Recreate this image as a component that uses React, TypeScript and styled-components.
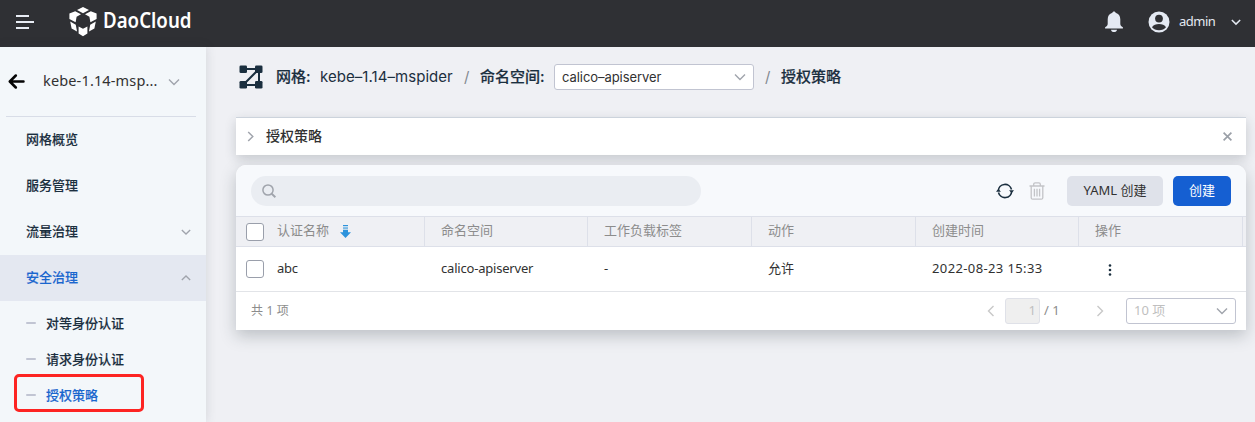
import React from 'react';
import styled, { createGlobalStyle } from 'styled-components';

const sans = `"Noto Sans", "Noto Sans CJK SC", sans-serif`;
const rounded = `Inter, "Noto Sans CJK SC", sans-serif`;

const GlobalStyle = createGlobalStyle`
  *, *::before, *::after { box-sizing: border-box; }
  body { margin: 0; background: #eff0f4; font-family: ${sans}; font-size: 13px; color: #313131; overflow: hidden; }
  button, input { font: inherit; border: 0; padding: 0; margin: 0; }
  svg { display: block; flex: none; }
`;

const Page = styled.div`
  height: 422px;
  display: flex;
  flex-direction: column;
  overflow: hidden;
`;

const TopBar = styled.header`
  height: 47px;
  flex: none;
  display: flex;
  align-items: center;
  padding: 0 14px 4px 16px;
  background: #2f3034;
  color: #e4e9f2;
`;

const Brand = styled.div`
  display: flex;
  align-items: center;
  gap: 5.5px;
  margin-left: 35px;
`;

const BrandName = styled.span`
  font-size: 21px;
  font-weight: 600;
  line-height: 28px;
  color: #fff;
  letter-spacing: 0;
  margin-top: -3px;
  transform: scaleX(0.89);
  transform-origin: left;
`;

const UserArea = styled.div`
  display: flex;
  align-items: center;
  margin-left: auto;
`;

const UserName = styled.span`
  font-size: 13px;
  margin: -2px 16px 0 9px;
  width: 36px;
  white-space: nowrap;
  letter-spacing: -0.5px;
`;

const Body = styled.div`
  flex: 1;
  min-height: 0;
  display: flex;
`;

const Sidebar = styled.nav`
  width: 206px;
  flex: none;
  background: #f3f7fa;
  box-shadow: 0 0 10px rgba(60, 70, 80, 0.16);
`;

const MeshPicker = styled.div`
  height: 70px;
  margin: 0 10px 0 6px;
  padding: 0 16px 0 2px;
  border-bottom: 1px solid #d8dde7;
  display: flex;
  align-items: center;
`;

const MeshName = styled.span`
  margin: -3px 0 0 18px;
  width: 126px;
  font-size: 14.5px;
  line-height: 20px;
  white-space: nowrap;
  letter-spacing: 0.15px;
`;

const NavItem = styled.a<{ $active?: boolean }>`
  height: 46px;
  display: flex;
  align-items: center;
  justify-content: space-between;
  padding: 0 15px 3px 26px;
  font-size: 13px;
  font-weight: 500;
  -webkit-text-stroke: 0.12px currentColor;
  color: ${(p) => (p.$active ? '#1a66ce' : '#1b2f3f')};
  background: ${(p) => (p.$active ? '#e4e8f1' : 'transparent')};
  & > svg { margin-top: 3px; }
`;

const SubNav = styled.div`
  padding-top: 4px;
`;

const SubItem = styled.a<{ $active?: boolean }>`
  height: 36px;
  position: relative;
  display: flex;
  align-items: center;
  padding: 0 0 1px 26px;
  gap: 10px;
  font-weight: 500;
  -webkit-text-stroke: 0.12px currentColor;
  color: ${(p) => (p.$active ? '#1a66ce' : '#1b2f3f')};
  &::before {
    content: '';
    width: 10px;
    height: 2px;
    margin-top: 1px;
    border-radius: 1px;
    background: #c1c5d3;
  }
`;

const Highlight = styled.span`
  position: absolute;
  left: 13.5px;
  top: -3px;
  width: 130px;
  height: 38px;
  border: 3px solid #fd2422;
  border-radius: 5px;
`;

const Main = styled.main`
  flex: 1;
  min-width: 0;
  padding: 16px 9px 0 30px;
`;

const Crumbs = styled.div`
  height: 28px;
  margin-left: 3px;
  display: flex;
  align-items: center;
  font-family: ${rounded};
  font-size: 15px;
  color: #1b2f3f;
  white-space: nowrap;
`;

const CrumbLabel = styled.span<{ $width: number }>`
  width: ${(p) => p.$width}px;
  margin-top: -3px;
  font-weight: 500;
  -webkit-text-stroke: 0.18px currentColor;
`;

const CrumbValue = styled.span`
  width: 144px;
  margin-top: -2px;
  font-size: 15px;
  letter-spacing: 0.05px;
`;

const Slash = styled.span<{ $width: number; $indent?: number }>`
  width: ${(p) => p.$width}px;
  padding-left: ${(p) => p.$indent ?? 0}px;
  margin-top: -2px;
  color: #838990;
`;

const SelectBox = styled.div<{ $width: number; $muted?: boolean }>`
  width: ${(p) => p.$width}px;
  height: 26px;
  display: flex;
  align-items: center;
  justify-content: space-between;
  padding: 0 7px;
  border: 1px solid #c1c4d1;
  border-radius: 3px;
  background: #fff;
  font-size: 13px;
  letter-spacing: ${(p) => (p.$muted ? 0 : -0.06)}px;
  color: ${(p) => (p.$muted ? '#bfbfbf' : '#313131')};
  & > span { margin-top: ${(p) => (p.$muted ? -3 : 0)}px; }
`;

const Banner = styled.section`
  height: 38px;
  margin-top: 26px;
  padding: 0 14px 1px 9px;
  display: flex;
  align-items: center;
  background: #fff;
  border-top: 1px solid #ccd3dc;
  box-shadow: 0 4px 12px rgba(40, 50, 60, 0.2);
`;

const BannerTitle = styled.h2`
  flex: 1;
  margin: 0 0 0 10px;
  font-size: 14px;
  font-weight: 500;
  line-height: 20px;
`;

const Card = styled.section`
  position: relative;
  margin-top: 10px;
  height: 165px;
  background: #fff;
  border-radius: 10px 10px 0 0;
  box-shadow: 0 6px 16px rgba(40, 50, 60, 0.25);
`;

const Toolbar = styled.div`
  height: 51px;
  padding: 0 15px;
  display: flex;
  align-items: center;
  background: #f7f9fc;
  border-radius: 10px 10px 0 0;
`;

const SearchBox = styled.div`
  width: 450px;
  height: 30px;
  padding-left: 11px;
  display: flex;
  align-items: center;
  border-radius: 15px;
  background: #eaedf2;
`;

const Actions = styled.div`
  margin-left: auto;
  display: flex;
  align-items: center;
`;

const Button = styled.button<{ $primary?: boolean }>`
  height: 30px;
  width: ${(p) => (p.$primary ? 58 : 96)}px;
  margin-left: ${(p) => (p.$primary ? 10 : 22)}px;
  padding-bottom: 2px;
  border-radius: 5px;
  font-size: 13px;
  color: ${(p) => (p.$primary ? '#fff' : '#313131')};
  background: ${(p) => (p.$primary ? '#155fd2' : '#dfe2ea')};
`;

const Row = styled.div<{ $head?: boolean }>`
  display: grid;
  grid-template-columns: 189px 163px 164px 164px 163px 164px 3px;
  height: ${(p) => (p.$head ? 31 : 45)}px;
  background: ${(p) => (p.$head ? '#eff0f4' : '#fff')};
  color: ${(p) => (p.$head ? '#8c8c8c' : '#313131')};
  border: solid ${(p) => (p.$head ? '#dde0e9' : '#e2e4e8')};
  border-width: ${(p) => (p.$head ? '1px 0' : '0 0 1px')};
`;

const Cell = styled.div<{ $head?: boolean; $first?: boolean; $spacing?: number }>`
  display: flex;
  align-items: center;
  padding-left: ${(p) => (p.$first ? 10 : 16)}px;
  border-right: 1px solid ${(p) => (p.$head ? '#dde0e9' : 'transparent')};
  white-space: nowrap;
  letter-spacing: ${(p) => p.$spacing ?? 0}px;
  & > span { margin-top: ${(p) => (p.$head ? -4 : -3)}px; }
`;

const Checkbox = styled.i<{ $drop?: number }>`
  width: 18px;
  height: 18px;
  margin: ${(p) => p.$drop ?? 0}px 13px 0 0;
  border: 1px solid #9a9fab;
  border-radius: 3px;
  background: #fff;
`;

const Footer = styled.div`
  height: 38px;
  padding: 0 10px 0 15px;
  display: flex;
  align-items: center;
  font-size: 12px;
  color: #8c8c8c;
`;

const FooterCount = styled.span`
  margin-top: -2px;
  word-spacing: 0.3px;
`;

const Pager = styled.div`
  margin-left: auto;
  display: flex;
  align-items: center;
  font-size: 13px;
`;

const PageNumber = styled.span`
  width: 35px;
  height: 26px;
  margin: 0 4px 0 8px;
  padding-right: 3px;
  line-height: 23px;
  text-align: right;
  color: #bfbfbf;
  background: #efefef;
  border: 1px solid #dfe1e8;
  border-radius: 3px;
`;

const PageTotal = styled.span`
  width: 50px;
  margin-top: -2px;
`;

const NextPage = styled.span`
  width: 32px;
`;

type Direction = 'up' | 'down' | 'left' | 'right';
const chevrons: Record<Direction, string> = {
  down: 'M1 3.5 6 8.5 11 3.5',
  up: 'M1 8.5 6 3.5 11 8.5',
  left: 'M8.5 1 3.5 6 8.5 11',
  right: 'M3.5 1 8.5 6 3.5 11',
};

const Chevron = ({ dir, size = 12, color = '#a0a4ac', weight = 1.4 }: { dir: Direction; size?: number; color?: string; weight?: number }) => (
  <svg width={size} height={size} viewBox="0 0 12 12" fill="none" stroke={color} strokeWidth={weight}>
    <path d={chevrons[dir]} />
  </svg>
);

const MenuIcon = () => (
  <svg width="18" height="14" viewBox="0 0 18 14" stroke="#e8ecf4" strokeWidth="1.8">
    <path d="M0 1h13M0 7h18M0 13h13" />
  </svg>
);

const BrandMark = () => (
  <svg width="28" height="30" viewBox="0 0 28 30" fill="#fff">
    <path d="M14 0 20 3.1 14 6.2 8 3.1Z" />
    <path d="M6.200 4.200 12 7.200 7.600 9.800 6.600 15.200 0.400 12 0.400 6.600Z" />
    <path d="M21.800 4.200 16 7.200 20.400 9.800 21.400 15.200 27.600 12 27.600 6.600Z" />
    <path d="M1.200 14.600 6.800 17.800 8 24.600 2.600 21.500Z" />
    <path d="M26.800 14.600 21.200 17.800 20 24.600 25.400 21.500Z" />
    <path d="M9.600 19.400 14 21.800 18.400 19.400 18.400 26.400 14 29.200 9.600 26.400Z" />
  </svg>
);

const BellIcon = () => (
  <svg width="20" height="22" viewBox="0 0 20 22" fill="#e4e9f2">
    <path d="M10 .5c.9 0 1.5.6 1.6 1.3 3 .8 4.7 3.2 4.7 6.4v4.5c0 1.4.8 2.5 2.6 3.6v1.3H1.1v-1.3c1.8-1.1 2.6-2.2 2.6-3.6V8.200c0-3.200 1.700-5.600 4.700-6.400C8.500 1.100 9.100.5 10 .5Z" />
    <path d="M7 18.700h6c-.2 1.400-1.400 2.300-3 2.300s-2.800-.9-3-2.300Z" />
  </svg>
);

const UserIcon = () => (
  <svg width="22" height="22" viewBox="0 0 22 22">
    <circle cx="11" cy="11" r="10.500" fill="#e4e9f2" />
    <circle cx="11" cy="7.600" r="3.900" fill="#2f3034" />
    <path d="M4 16.300C5.300 14.100 8 13 11 13s5.700 1.100 7 3.300c-1.500 1.800-4 2.900-7 2.900s-5.500-1.100-7-2.900Z" fill="#2f3034" />
  </svg>
);

const BackIcon = () => (
  <svg width="17" height="15" viewBox="0 0 17 15" fill="none" stroke="#050505" strokeWidth="2.500" strokeLinecap="round" strokeLinejoin="round">
    <path d="M7.800 1.500 1.800 7.500l6 6M2 7.500h13.500" />
  </svg>
);

const MeshIcon = () => (
  <svg width="24" height="24" viewBox="0 0 24 24" fill="#1b2f3f">
    <path d="M4 4H20V20H4L20 4" fill="none" stroke="#1b2f3f" strokeWidth="2" />
    <rect x=".5" y=".5" width="7.500" height="7.500" rx="1.300" />
    <rect x="16" y=".5" width="7.500" height="7.500" rx="1.300" />
    <rect x=".5" y="16" width="7.500" height="7.500" rx="1.300" />
    <rect x="16" y="16" width="7.500" height="7.500" rx="1.300" />
  </svg>
);

const SearchIcon = () => (
  <svg width="14" height="14" viewBox="0 0 14 14" fill="none" stroke="#a0a4ac" strokeWidth="1.500">
    <circle cx="6" cy="6" r="5.100" />
    <path d="m9.700 9.700 3.700 3.500" strokeWidth="1.900" />
  </svg>
);

const RefreshIcon = () => (
  <svg width="18" height="16" viewBox="0 0 18 16" fill="none" stroke="#1b2f3f" strokeWidth="1.600">
    <path d="M2.300 8A6.700 6.700 0 0 1 15.500 6.500M15.700 8A6.700 6.700 0 0 1 2.500 9.500" />
    <path d="M0 8.800 2.400 5.800 4.900 8.800ZM13.100 7.200 15.600 10.200 18 7.200Z" fill="#1b2f3f" stroke="none" />
  </svg>
);

const TrashIcon = () => (
  <svg width="16" height="18" viewBox="0 0 16 18" fill="none" stroke="#c3c4c7" strokeWidth="1.300">
    <path d="M.5 4h15M4.700 4V2.200c0-.8.6-1.400 1.400-1.400h3.800c.8 0 1.400.6 1.400 1.400V4M2.200 4v11.700c0 .9.600 1.500 1.500 1.500h8.600c.9 0 1.500-.6 1.500-1.500V4M5.400 6.800v7.600M8 6.800v7.600M10.600 6.800v7.600" />
  </svg>
);

const SortIcon = () => (
  <svg width="11" height="13" viewBox="0 0 11 13" fill="#2d93dc">
    <path d="M3 0h5v1.200H3Z" />
    <path d="M3 2.200h5v1.700H3Z" opacity=".65" />
    <path d="M3 4.700h5v2.500h3L5.500 13 0 7.200h3Z" />
  </svg>
);

const CloseIcon = () => (
  <svg width="9" height="9" viewBox="0 0 9 9" stroke="#9ba0a8" strokeWidth="1.700">
    <path d="m.6.600 7.800 7.800M8.400.6.600 8.400" />
  </svg>
);

const MoreIcon = () => (
  <svg width="4" height="12" viewBox="0 0 4 12" fill="#1b2f3f">
    <circle cx="2" cy="1.500" r="1.300" />
    <circle cx="2" cy="6" r="1.300" />
    <circle cx="2" cy="10.500" r="1.300" />
  </svg>
);

const BellSlot = styled.span`
  margin-right: 24px;
`;
const TrashSlot = styled.span`
  margin-left: 15px;
`;
const SortSlot = styled.div`
  margin-left: 11px;
`;
const MoreSlot = styled.div`
  margin: 1px 0 0 13px;
`;
const MeshSlot = styled.div`
  width: 37px;
`;

export default function App() {
  return (
    <Page>
      <GlobalStyle />
      <TopBar>
        <MenuIcon />
        <Brand>
          <BrandMark />
          <BrandName>DaoCloud</BrandName>
        </Brand>
        <UserArea>
          <BellSlot><BellIcon /></BellSlot>
          <UserIcon />
          <UserName>admin</UserName>
          <Chevron dir="down" size={10} color="#e4e9f2" weight={1.8} />
        </UserArea>
      </TopBar>
      <Body>
        <Sidebar>
          <MeshPicker>
            <BackIcon />
            <MeshName>kebe-1.14-msp...</MeshName>
            <Chevron dir="down" />
          </MeshPicker>
          <NavItem>网格概览</NavItem>
          <NavItem>服务管理</NavItem>
          <NavItem>流量治理<Chevron dir="down" size={10} weight={1.6} /></NavItem>
          <NavItem $active>安全治理<Chevron dir="up" size={10} weight={1.6} /></NavItem>
          <SubNav>
            <SubItem>对等身份认证</SubItem>
            <SubItem>请求身份认证</SubItem>
            <SubItem $active>授权策略<Highlight /></SubItem>
          </SubNav>
        </Sidebar>
        <Main>
          <Crumbs>
            <MeshSlot><MeshIcon /></MeshSlot>
            <CrumbLabel $width={44}>网格:</CrumbLabel>
            <CrumbValue>kebe–1.14–mspider</CrumbValue>
            <Slash $width={16}>/</Slash>
            <CrumbLabel $width={74}>命名空间:</CrumbLabel>
            <SelectBox $width={200}><span>calico–apiserver</span><Chevron dir="down" /></SelectBox>
            <Slash $width={27} $indent={11}>/</Slash>
            <CrumbLabel $width={62}>授权策略</CrumbLabel>
          </Crumbs>
          <Banner>
            <Chevron dir="right" size={11} weight={1.6} />
            <BannerTitle>授权策略</BannerTitle>
            <CloseIcon />
          </Banner>
          <Card>
            <Toolbar>
              <SearchBox><SearchIcon /></SearchBox>
              <Actions>
                <RefreshIcon />
                <TrashSlot><TrashIcon /></TrashSlot>
                <Button>YAML 创建</Button>
                <Button $primary>创建</Button>
              </Actions>
            </Toolbar>
            <Row $head>
              <Cell $head $first><Checkbox $drop={1} /><span>认证名称</span><SortSlot><SortIcon /></SortSlot></Cell>
              <Cell $head><span>命名空间</span></Cell>
              <Cell $head><span>工作负载标签</span></Cell>
              <Cell $head><span>动作</span></Cell>
              <Cell $head><span>创建时间</span></Cell>
              <Cell $head><span>操作</span></Cell>
            </Row>
            <Row>
              <Cell $first $spacing={-0.25}><Checkbox /><span>abc</span></Cell>
              <Cell $spacing={-0.2}><span>calico-apiserver</span></Cell>
              <Cell><span>-</span></Cell>
              <Cell><span>允许</span></Cell>
              <Cell $spacing={0.38}><span>2022-08-23 15:33</span></Cell>
              <Cell><MoreSlot><MoreIcon /></MoreSlot></Cell>
            </Row>
            <Footer>
              <FooterCount>共 1 项</FooterCount>
              <Pager>
                <Chevron dir="left" color="#c8c8c8" />
                <PageNumber>1</PageNumber>
                <PageTotal>/ 1</PageTotal>
                <NextPage><Chevron dir="right" color="#c8c8c8" /></NextPage>
                <SelectBox $width={110} $muted><span>10 项</span><Chevron dir="down" /></SelectBox>
              </Pager>
            </Footer>
          </Card>
        </Main>
      </Body>
    </Page>
  );
}
